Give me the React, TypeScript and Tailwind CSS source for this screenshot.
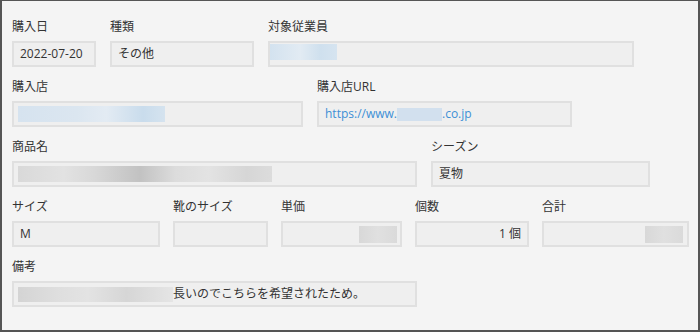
import React from "react";

const Label = ({ children }: { children: React.ReactNode }) => (
  <div className="h-[16px] leading-[16px] text-[12px] text-[#333] mb-[6px] whitespace-nowrap">{children}</div>
);

const Box = ({
  children,
  className = "",
}: {
  children?: React.ReactNode;
  className?: string;
}) => (
  <div
    className={`h-[26px] border-2 border-[#e0e0e0] bg-[#efefef] flex items-center text-[12px] text-[#333] whitespace-nowrap overflow-hidden ${className}`}
  >
    {children}
  </div>
);

const Field = ({
  label,
  w,
  children,
  boxClass = "pl-[6px]",
}: {
  label: string;
  w: string;
  children?: React.ReactNode;
  boxClass?: string;
}) => (
  <div className={`flex flex-col ${w}`}>
    <Label>{label}</Label>
    <Box className={boxClass}>{children}</Box>
  </div>
);

export default function App() {
  return (
    <div
      className="w-[700px] h-[332px] bg-[#f4f4f4] border-t border-l-2 border-r-2 border-b-2 border-[#555] pt-[18px] pl-[10px] flex flex-col gap-[12px]"
      style={{ fontFamily: '"Open Sans", "Noto Sans CJK JP", sans-serif' }}
    >
      {/* row 1 */}
      <div className="flex gap-[14px]">
        <Field label="購入日" w="w-[84px]">2022-07-20</Field>
        <Field label="種類" w="w-[144px]">その他</Field>
        <Field label="対象従業員" w="w-[366px]" boxClass="pl-[0px]">
          <span className="block w-[67px] h-[16px] -mt-[4px] bg-[linear-gradient(90deg,#d3e2ef_0%,#e2ebf3_45%,#cfe0ee_75%,#d6e4f0_100%)] blur-[0.6px]" />
        </Field>
      </div>
      {/* row 2 */}
      <div className="flex gap-[14px]">
        <Field label="購入店" w="w-[291px]" boxClass="pl-[4px]">
          <span className="block w-[147px] h-[16px] bg-[linear-gradient(90deg,#d6e3ef_0%,#dbe6f0_40%,#e3ebf3_60%,#c9dcec_85%,#d5e3ef_100%)] blur-[0.6px]" />
        </Field>
        <Field label="購入店URL" w="w-[255px]" boxClass="pl-[6px]">
          <span className="text-[#3d8fd6]">https://www.</span>
          <span className="inline-block w-[45px] h-[13px] bg-[#d2e0ee] blur-[0.6px]" />
          <span className="text-[#3d8fd6]">.co.jp</span>
        </Field>
      </div>
      {/* row 3 */}
      <div className="flex gap-[14px]">
        <Field label="商品名" w="w-[405px]" boxClass="pl-[4px]">
          <span className="block w-[254px] h-[16px] bg-[linear-gradient(90deg,#d9d9d9_0%,#e2e2e2_18%,#d8d8d8_30%,#c2c2c2_48%,#dcdcdc_62%,#e3e3e3_75%,#d6d6d6_90%,#dcdcdc_100%)] blur-[0.6px]" />
        </Field>
        <Field label="シーズン" w="w-[219px]">夏物</Field>
      </div>
      {/* row 4 */}
      <div className="flex gap-[13px]">
        <Field label="サイズ" w="w-[148px]">M</Field>
        <Field label="靴のサイズ" w="w-[95px]" />
        <Field label="単価" w="w-[121px]" boxClass="justify-end pr-[3px]">
          <span className="block w-[38px] h-[17px] bg-[linear-gradient(90deg,#d8d8d8,#e0e0e0,#dadada)] blur-[0.6px]" />
        </Field>
        <Field label="個数" w="w-[114px]" boxClass="justify-end pr-[6px]">1 個</Field>
        <Field label="合計" w="w-[147px]" boxClass="justify-end pr-[4px]">
          <span className="block w-[38px] h-[17px] bg-[linear-gradient(90deg,#d8d8d8,#e0e0e0,#dadada)] blur-[0.6px]" />
        </Field>
      </div>
      {/* row 5 */}
      <div className="flex">
        <Field label="備考" w="w-[405px]" boxClass="pl-[4px]">
          <span className="block w-[155px] h-[15px] bg-[linear-gradient(90deg,#d4d4d4_0%,#dedede_25%,#e3e3e3_45%,#d6d6d6_70%,#e5e5e5_100%)] blur-[0.6px]" />
          <span>長いのでこちらを希望されたため。</span>
        </Field>
      </div>
    </div>
  );
}
